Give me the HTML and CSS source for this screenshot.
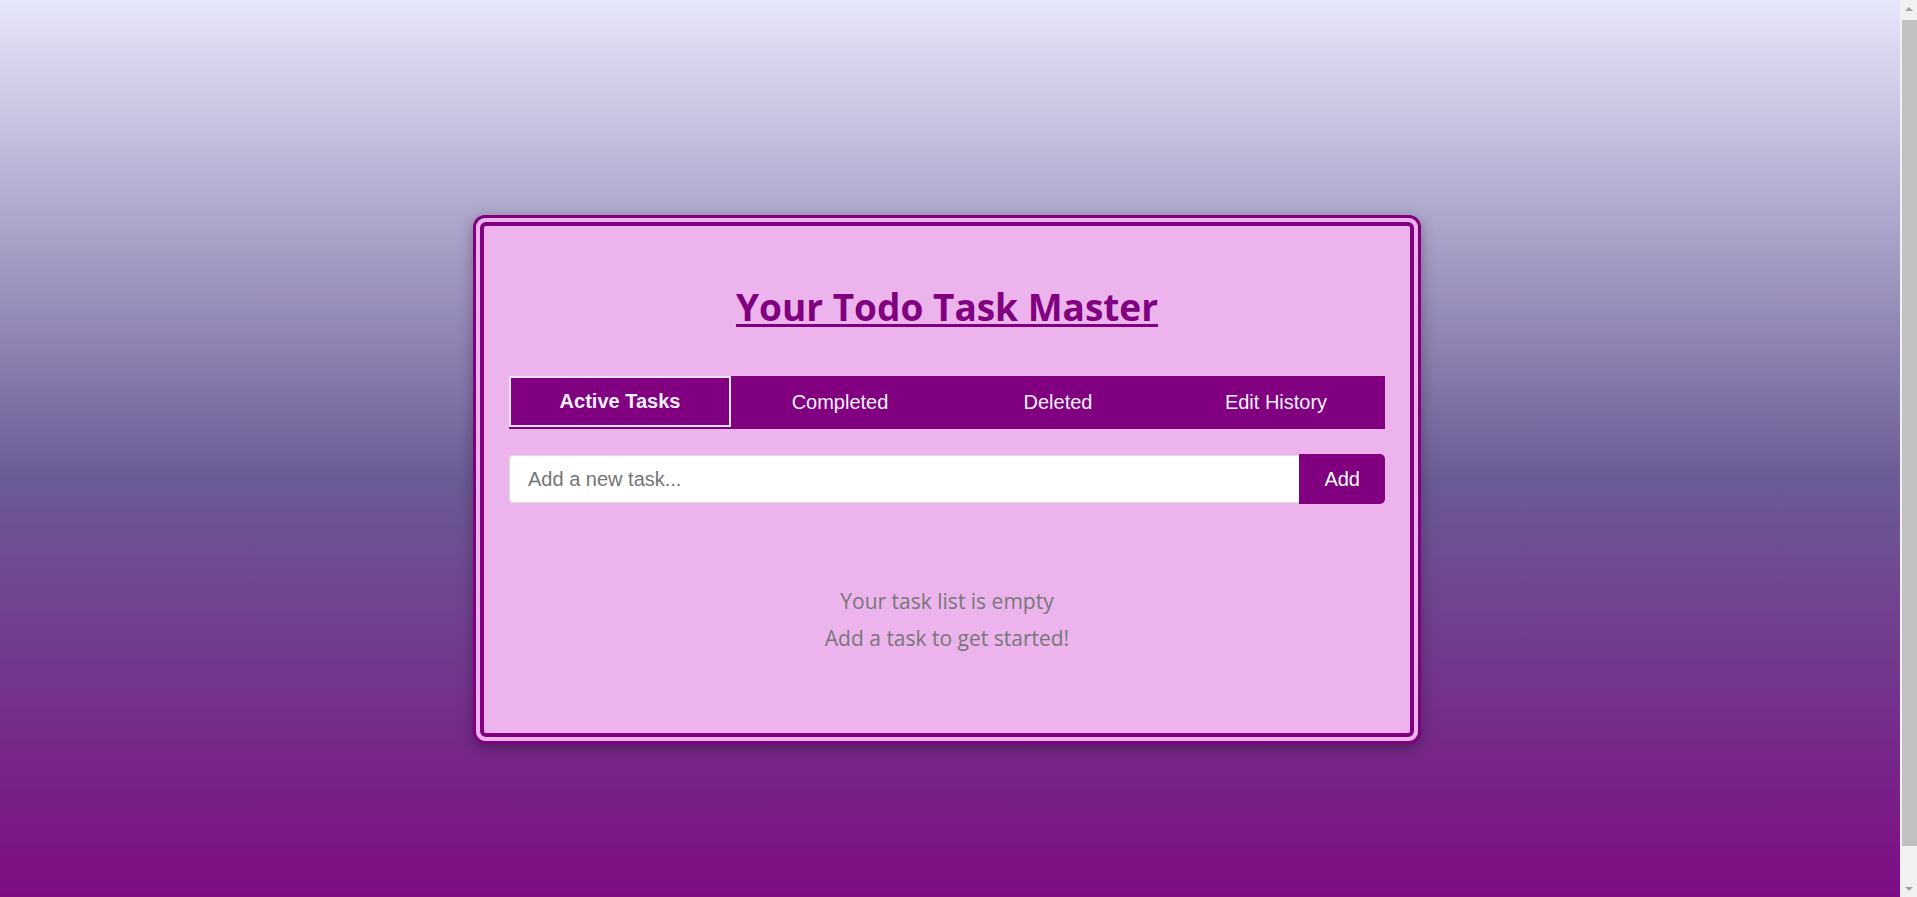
FILE: index.html
```html
<!DOCTYPE html>
<html lang="en">
<head>
<meta charset="UTF-8">
<title>Your Todo Task Master</title>
<link rel="stylesheet" href="styles.css">
</head>
<body>
  <div class="card">
    <div class="card-inner">
      <h1 class="title">Your Todo Task Master</h1>
      <nav class="tabs">
        <button class="tab active">Active Tasks</button>
        <button class="tab">Completed</button>
        <button class="tab">Deleted</button>
        <button class="tab">Edit History</button>
      </nav>
      <form class="add-row" onsubmit="return false">
        <input class="add-input" type="text" placeholder="Add a new task...">
        <button class="add-btn" type="submit">Add</button>
      </form>
      <div class="empty">
        <p class="empty-line">Your task list is empty</p>
        <p class="empty-line">Add a task to get started!</p>
      </div>
    </div>
  </div>
  <div class="scrollbar" aria-hidden="true">
    <div class="scroll-arrow up"></div>
    <div class="scroll-track"><div class="scroll-thumb"></div></div>
    <div class="scroll-arrow down"></div>
  </div>
</body>
</html>
```
FILE: styles.css
```css
* { box-sizing: border-box; }

body {
  margin: 0;
  padding: 31px 23px 31px 0;
  min-height: 100vh;
  box-sizing: content-box;
  display: flex;
  justify-content: center;
  align-items: center;
  font-family: "Liberation Sans", Arial, sans-serif;
  background: linear-gradient(to bottom, #e6e6fa 0%, #6b5b95 50%, #800080 100%);
}

.card {
  width: 948px;
  background: #ecb3ed;
  border: 3px solid #800080;
  border-radius: 12px;
  padding: 4px;
  box-shadow: 0 4px 15px rgba(0, 0, 0, 0.3);
}

.card-inner {
  border: 4px solid #800080;
  border-radius: 6px;
  padding: 25px;
}

.title {
  margin: 32px 0 45px;
  text-align: center;
  font-family: "Open Sans", "Noto Sans", sans-serif;
  font-weight: 700;
  font-size: 37px;
  line-height: 48px;
  color: #800080;
  text-decoration: underline;
  text-decoration-thickness: 3px;
  text-underline-offset: 3px;
}

.tabs {
  display: flex;
  height: 53px;
  background: #800080;
  margin-bottom: 25px;
}

.tab {
  flex: 1;
  border: none;
  background: #800080;
  color: #f4f0ff;
  font-family: "Liberation Sans", Arial, sans-serif;
  font-size: 20px;
  padding: 0;
  cursor: pointer;
}

.tab.active {
  font-weight: 700;
  border: 2px solid #e6e6fa;
  height: 51px;
}

.add-row {
  display: flex;
  height: 50px;
  margin: 0;
}

.add-input {
  flex: 1;
  margin: 1px 0;
  border: 1px solid #ddd;
  border-right: none;
  border-radius: 4px 0 0 4px;
  background: #fff;
  padding: 0 18px;
  font-family: "Liberation Sans", Arial, sans-serif;
  font-size: 20px;
  color: #333;
  outline: none;
}

.add-input::placeholder { color: #757575; }

.add-btn {
  border: none;
  border-radius: 0 5px 5px 0;
  background: #800080;
  color: #fff;
  padding: 0 25px;
  font-family: "Liberation Sans", Arial, sans-serif;
  font-size: 20px;
  cursor: pointer;
}

.empty {
  padding: 79px 0 51px;
  text-align: center;
  font-family: "Open Sans", "Noto Sans", sans-serif;
  font-size: 21px;
  color: #777;
}

.empty-line {
  margin: 0;
  line-height: 37px;
}

.scrollbar {
  position: fixed;
  top: 0;
  right: 0;
  width: 17px;
  height: 100vh;
  background: #f1f1f1;
  display: flex;
  flex-direction: column;
}

.scroll-arrow {
  height: 17px;
  display: flex;
  justify-content: center;
  align-items: center;
}

.scroll-arrow.up::before,
.scroll-arrow.down::before {
  content: "";
  border-left: 4px solid transparent;
  border-right: 4px solid transparent;
}

.scroll-arrow.up::before { border-bottom: 4px solid #a3a3a3; }
.scroll-arrow.down::before { border-top: 4px solid #a3a3a3; }

.scroll-track {
  flex: 1;
  padding: 3px 0 34px 2px;
}

.scroll-thumb {
  height: 100%;
  background: #c1c1c1;
}
```
